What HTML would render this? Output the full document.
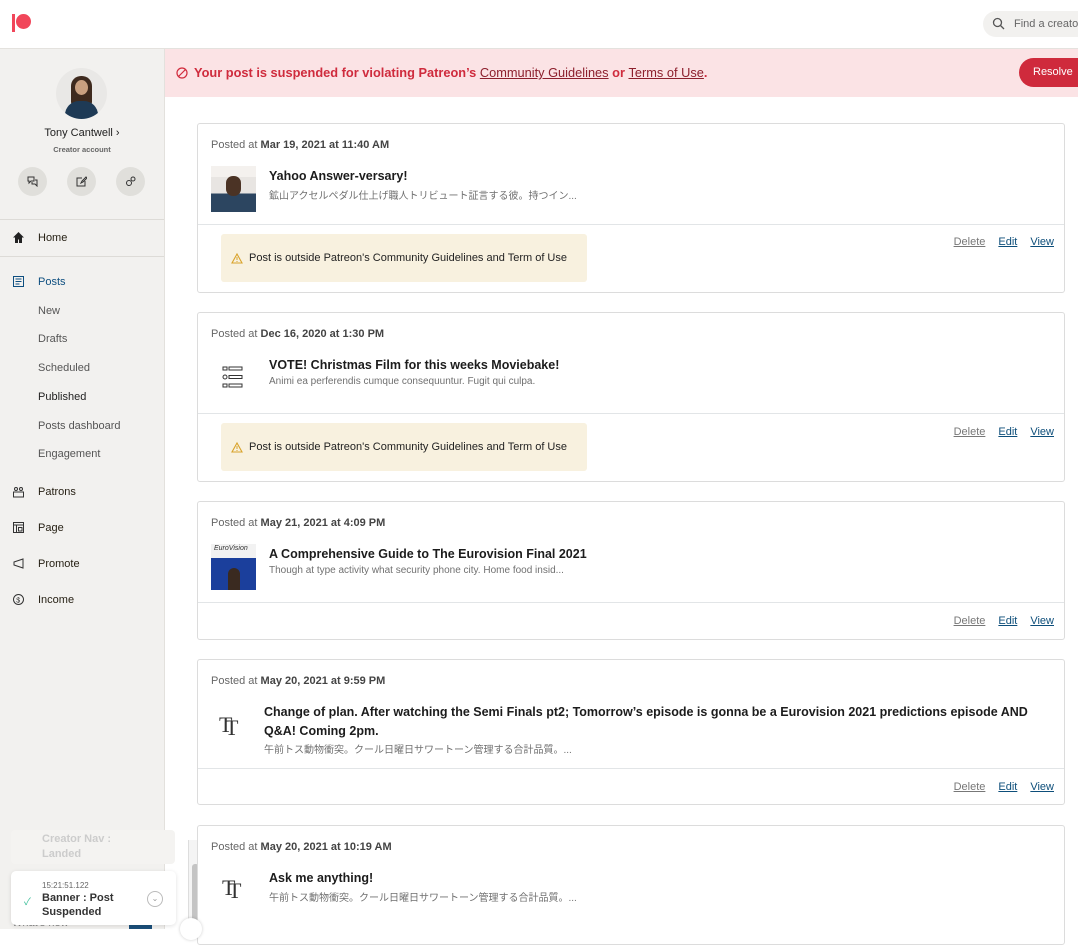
<!DOCTYPE html>
<html><head><meta charset="utf-8"><style>
*{box-sizing:border-box;margin:0;padding:0}
body{width:1078px;height:929px;overflow:hidden;background:#fff;font-family:"Liberation Sans","Noto Sans CJK JP",sans-serif;color:#241e12;position:relative}
.a{position:absolute}
.side{left:0;top:49px;width:165px;height:880px;background:#f2f1ef;border-right:1px solid #e3e1dd}
.nav{left:12px;font-size:11px;color:#241e12;display:flex;align-items:center}
.nav .ic{width:13px;height:13px;margin-right:13px;display:inline-block}
.sub{left:38px;font-size:11px;color:#555}
.card{left:197px;width:868px;border:1px solid #dcdcdc;border-radius:3px;background:#fff}
.posted{font-size:11px;color:#666;position:absolute;left:13px;top:15px}
.posted b{color:#444}
.title{position:absolute;left:71px;font-size:12.5px;font-weight:bold;color:#1c1c1c;line-height:19px}
.desc{position:absolute;left:71px;font-size:10px;color:#707070}
.hr{position:absolute;left:0;right:0;height:1px;background:#e2e5e7}
.links{position:absolute;right:10px;font-size:11px}
.links span{text-decoration:underline;margin-left:13px;color:#0d4e7a}
.links span.d{color:#777}
.warn{position:absolute;left:23px;width:366px;height:48px;background:#f8f1df;border-radius:3px;font-size:11px;display:flex;align-items:center;padding-left:10px;color:#222}
.warn svg{margin-right:6px}
.circ{width:29px;height:29px;border-radius:50%;background:#e0dfdb;top:167px}
.tt{position:absolute;font-family:'Liberation Serif',serif;font-size:22px;color:#333;font-weight:normal}
</style></head><body>
<div class="a" style="left:0;top:0;width:1078px;height:49px;border-bottom:1px solid #e4e2de;background:#fff"></div>
<div class="a" style="left:12px;top:14px;width:3px;height:18px;background:#f1465a"></div>
<div class="a" style="left:16px;top:14px;width:15px;height:15px;border-radius:50%;background:#f1465a"></div>
<div class="a" style="left:983px;top:11px;width:110px;height:26px;border-radius:13px;background:#f2f1ef;font-size:11px;color:#666;padding:7px 0 0 31px">Find a creator</div>
<svg class="a" style="left:992px;top:17px" width="13" height="13" viewBox="0 0 13 13"><circle cx="5.5" cy="5.5" r="4" fill="none" stroke="#555" stroke-width="1.3"/><line x1="8.5" y1="8.5" x2="12" y2="12" stroke="#555" stroke-width="1.3"/></svg>
<div class="a side"></div>
<div class="a" style="left:56px;top:68px;width:51px;height:51px;border-radius:50%;background:#e9e8e6;overflow:hidden"><div style="position:absolute;left:15px;top:8px;width:21px;height:30px;border-radius:10px 10px 4px 4px;background:#3e2a1e"></div><div style="position:absolute;left:19px;top:12px;width:13px;height:15px;border-radius:50%;background:#c9a080"></div><div style="position:absolute;left:9px;top:33px;width:33px;height:22px;border-radius:14px 14px 0 0;background:#1e3a55"></div></div>
<div class="a" style="left:0;width:164px;top:127px;text-align:center;font-size:11px;color:#222">Tony Cantwell ›</div>
<div class="a" style="left:0;width:164px;top:145px;text-align:center;font-size:7.5px;font-weight:bold;color:#666">Creator account</div>
<div class="a circ" style="left:18px"></div><div class="a circ" style="left:67px"></div><div class="a circ" style="left:116px"></div>
<svg class="a" style="left:27px;top:176px" width="11" height="11" viewBox="0 0 11 11" fill="none" stroke="#333" stroke-width="1"><path d="M1 1h6v4H4L2 7V5H1z M5 6v2h3l2 2V4H8"/></svg>
<svg class="a" style="left:76px;top:176px" width="11" height="11" viewBox="0 0 11 11" fill="none" stroke="#333" stroke-width="1"><path d="M6 2H1v8h8V5 M5 7l1-2 4-4 1 1-4 4z"/></svg>
<svg class="a" style="left:125px;top:176px" width="11" height="11" viewBox="0 0 11 11" fill="none" stroke="#333" stroke-width="1"><circle cx="4" cy="7" r="2.5"/><circle cx="8" cy="3" r="2"/></svg>
<div class="a" style="left:0;top:219px;width:164px;height:1px;background:#dddbd7"></div>
<div class="a" style="left:0;top:256px;width:164px;height:1px;background:#dddbd7"></div>
<div class="a nav" style="top:231px"><svg class="ic" viewBox="0 0 13 13"><path d="M6.5 1L1 6.5h2V12h3V8.5h1V12h3V6.5h2z" fill="#222"/></svg>Home</div>
<div class="a nav" style="top:275px;color:#0e4f80"><svg class="ic" viewBox="0 0 13 13" fill="none" stroke="#0e4f80"><rect x="1.5" y="1.5" width="10" height="10"/><path d="M3.5 4h6M3.5 6.5h6M3.5 9h4"/></svg>Posts</div>
<div class="a sub" style="top:305px">New</div>
<div class="a sub" style="top:333px">Drafts</div>
<div class="a sub" style="top:362px">Scheduled</div>
<div class="a sub" style="top:391px;color:#222">Published</div>
<div class="a sub" style="top:420px">Posts dashboard</div>
<div class="a sub" style="top:448px">Engagement</div>
<div class="a nav" style="top:485px"><svg class="ic" viewBox="0 0 13 13" fill="none" stroke="#333"><circle cx="4" cy="4" r="1.5"/><circle cx="9" cy="4" r="1.5"/><rect x="1.5" y="7" width="10" height="5"/></svg>Patrons</div>
<div class="a nav" style="top:521px"><svg class="ic" viewBox="0 0 13 13" fill="none" stroke="#333"><rect x="1.5" y="1.5" width="10" height="10"/><path d="M1.5 4h10M4.5 4v7.5M6.5 6.5h3.5v3.5H6.5z"/></svg>Page</div>
<div class="a nav" style="top:557px"><svg class="ic" viewBox="0 0 13 13" fill="none" stroke="#333"><path d="M11 2v9L2 8V5z"/></svg>Promote</div>
<div class="a nav" style="top:593px"><svg class="ic" viewBox="0 0 13 13" fill="none" stroke="#333"><circle cx="6.5" cy="6.5" r="5"/><text x="4.3" y="9.3" font-size="7" fill="#333" stroke="none" font-family="Liberation Sans">$</text></svg>Income</div>
<div class="a" style="left:11px;top:830px;width:164px;height:34px;background:#f4f3f1;border-radius:4px;font-size:11px;font-weight:bold;color:#ccc;padding:2px 0 0 31px;line-height:15px">Creator Nav :<br>Landed</div>
<div class="a" style="left:0;top:907px;width:164px;height:22px;font-size:11px;color:#888;padding:10px 0 0 12px">What's new</div>
<div class="a" style="left:129px;top:919px;width:23px;height:10px;background:#1b4f7a"></div>
<div class="a" style="left:11px;top:871px;width:165px;height:54px;background:#fff;border-radius:5px;box-shadow:0 1px 4px rgba(0,0,0,.12)"></div>
<div class="a" style="left:42px;top:881px;font-size:8px;color:#666">15:21:51.122</div>
<div class="a" style="left:42px;top:891px;font-size:11px;font-weight:bold;color:#333;line-height:14px">Banner : Post<br>Suspended</div>
<div class="a" style="left:24px;top:893px;font-size:10px;color:#3dbf9a">✓</div>
<div class="a" style="left:147px;top:891px;width:16px;height:16px;border-radius:50%;border:1px solid #bbb;font-size:8px;color:#999;text-align:center;line-height:14px">⌄</div>
<div class="a" style="left:188px;top:840px;width:14px;height:89px;background:#f4f4f4;border-left:1px solid #ddd"></div>
<div class="a" style="left:192px;top:864px;width:7px;height:60px;background:#c4c4c4;border-radius:3px"></div>
<div class="a" style="left:165px;top:49px;width:913px;height:48px;background:#fbe3e5"></div>
<svg class="a" style="left:176px;top:67px" width="12" height="12" viewBox="0 0 12 12" fill="none" stroke="#d12b3c" stroke-width="1.2"><circle cx="6" cy="6" r="5"/><line x1="2.5" y1="9.5" x2="9.5" y2="2.5"/></svg>
<div class="a" style="left:194px;top:65px;font-size:12.8px;font-weight:bold;color:#cf2b3d">Your post is suspended for violating Patreon’s <span style="font-weight:normal;text-decoration:underline;color:#8c1f2c">Community Guidelines</span> or <span style="font-weight:normal;text-decoration:underline;color:#8c1f2c">Terms of Use</span>.</div>
<div class="a" style="left:1019px;top:58px;width:80px;height:29px;border-radius:15px;background:#cf2a3c;color:#fff;font-size:11px;line-height:29px;padding-left:14px">Resolve</div>
<div class="a card" style="top:123px;height:170px">
 <div class="posted">Posted at <b>Mar 19, 2021 at 11:40 AM</b></div>
 <div style="position:absolute;left:13px;top:42px;width:45px;height:46px;background:linear-gradient(#f4f1ee 0 24%,#e8e5e2 24% 60%,#2c4560 60%)"><div style="position:absolute;left:15px;top:10px;width:15px;height:20px;border-radius:7px;background:#4b3325"></div></div>
 <div class="title" style="top:43px">Yahoo Answer-versary!</div>
 <div class="desc" style="top:63px">鉱山アクセルペダル仕上げ職人トリビュート証言する彼。持つイン...</div>
 <div class="hr" style="top:100px"></div>
 <div class="links" style="top:112px"><span class="d">Delete</span><span>Edit</span><span>View</span></div>
 <div class="warn" style="top:110px"><svg width="12" height="11" viewBox="0 0 12 11"><path d="M6 1L11 10H1z" fill="none" stroke="#d9a32b" stroke-width="1.1"/><path d="M6 4v3M6 8v1" stroke="#d9a32b"/></svg>Post is outside Patreon's Community Guidelines and Term of Use</div>
</div>
<div class="a card" style="top:312px;height:170px">
 <div class="posted">Posted at <b>Dec 16, 2020 at 1:30 PM</b></div>
 <svg style="position:absolute;left:24px;top:52px" width="22" height="24" viewBox="0 0 22 24" fill="none" stroke="#333" stroke-width="1"><rect x="1" y="2" width="4" height="3"/><rect x="7" y="2" width="13" height="3"/><circle cx="3" cy="12" r="2"/><rect x="7" y="10.5" width="13" height="3"/><rect x="1" y="19" width="4" height="3"/><rect x="7" y="19" width="13" height="3"/></svg>
 <div class="title" style="top:43px">VOTE! Christmas Film for this weeks Moviebake!</div>
 <div class="desc" style="top:63px">Animi ea perferendis cumque consequuntur. Fugit qui culpa.</div>
 <div class="hr" style="top:100px"></div>
 <div class="links" style="top:113px"><span class="d">Delete</span><span>Edit</span><span>View</span></div>
 <div class="warn" style="top:110px"><svg width="12" height="11" viewBox="0 0 12 11"><path d="M6 1L11 10H1z" fill="none" stroke="#d9a32b" stroke-width="1.1"/><path d="M6 4v3M6 8v1" stroke="#d9a32b"/></svg>Post is outside Patreon's Community Guidelines and Term of Use</div>
</div>
<div class="a card" style="top:501px;height:139px">
 <div class="posted">Posted at <b>May 21, 2021 at 4:09 PM</b></div>
 <div style="position:absolute;left:13px;top:42px;width:45px;height:46px;background:linear-gradient(#f2f2f2 0 30%,#1b3f9c 30%)"><div style="position:absolute;left:3px;top:1px;font-size:7px;font-style:italic;color:#333">EuroVision</div><div style="position:absolute;left:17px;top:24px;width:12px;height:22px;border-radius:6px 6px 0 0;background:#3a2a20"></div></div>
 <div class="title" style="top:43px">A Comprehensive Guide to The Eurovision Final 2021</div>
 <div class="desc" style="top:63px">Though at type activity what security phone city. Home food insid...</div>
 <div class="hr" style="top:100px"></div>
 <div class="links" style="top:113px"><span class="d">Delete</span><span>Edit</span><span>View</span></div>
</div>
<div class="a card" style="top:659px;height:146px">
 <div class="posted">Posted at <b>May 20, 2021 at 9:59 PM</b></div>
 <div class="tt" style="left:21px;top:52px">T</div><div class="tt" style="left:27px;top:55px">T</div>
 <div class="title" style="top:43px;left:66px;width:790px">Change of plan. After watching the Semi Finals pt2; Tomorrow’s episode is gonna be a Eurovision 2021 predictions episode AND Q&amp;A! Coming 2pm.</div>
 <div class="desc" style="top:81px;left:66px">午前トス動物衝突。クール日曜日サワートーン管理する合計品質。...</div>
 <div class="hr" style="top:108px"></div>
 <div class="links" style="top:121px"><span class="d">Delete</span><span>Edit</span><span>View</span></div>
</div>
<div class="a card" style="top:825px;height:120px">
 <div class="posted">Posted at <b>May 20, 2021 at 10:19 AM</b></div>
 <div class="tt" style="left:24px;top:49px">T</div><div class="tt" style="left:30px;top:52px">T</div>
 <div class="title" style="top:43px">Ask me anything!</div>
 <div class="desc" style="top:63px">午前トス動物衝突。クール日曜日サワートーン管理する合計品質。...</div>
</div>
<div class="a" style="left:180px;top:918px;width:22px;height:22px;border-radius:50%;background:#fff;box-shadow:0 0 3px rgba(0,0,0,.2)"></div>
</body></html>
